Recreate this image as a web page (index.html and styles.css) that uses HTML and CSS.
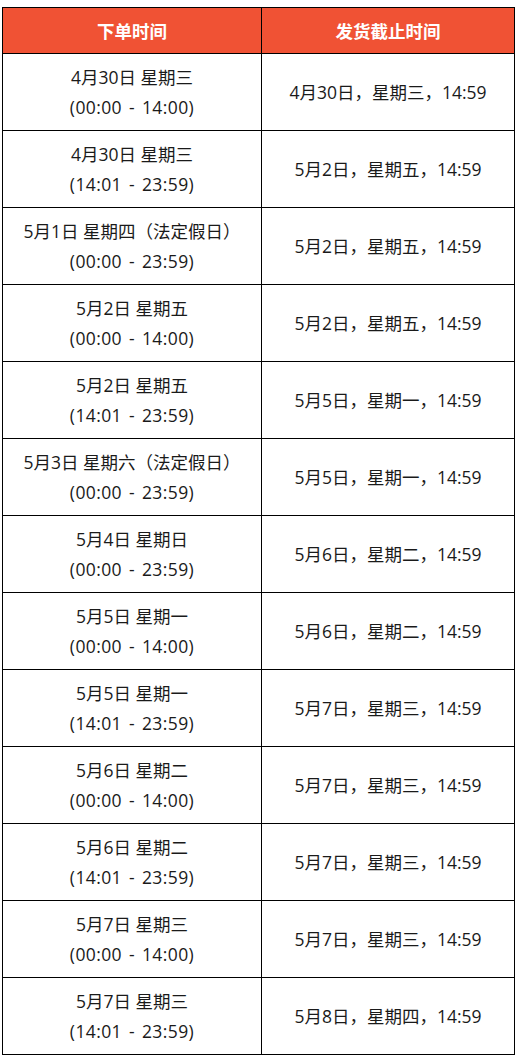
FILE: index.html
```html
<!DOCTYPE html>
<html lang="zh-CN">
<head>
<meta charset="utf-8">
<link rel="stylesheet" href="styles.css">
</head>
<body>
<table class="ship">
  <colgroup><col class="c1"><col class="c2"></colgroup>
  <thead>
    <tr><th>下单时间</th><th>发货截止时间</th></tr>
  </thead>
  <tbody>
    <tr><td>4月30日 星期三<br><span class="t">(00:00 - 14:00)</span></td><td>4月30日，星期三，14:59</td></tr>
    <tr><td>4月30日 星期三<br><span class="t">(14:01 - 23:59)</span></td><td>5月2日，星期五，14:59</td></tr>
    <tr><td>5月1日 星期四（法定假日）<br><span class="t">(00:00 - 23:59)</span></td><td>5月2日，星期五，14:59</td></tr>
    <tr><td>5月2日 星期五<br><span class="t">(00:00 - 14:00)</span></td><td>5月2日，星期五，14:59</td></tr>
    <tr><td>5月2日 星期五<br><span class="t">(14:01 - 23:59)</span></td><td>5月5日，星期一，14:59</td></tr>
    <tr><td>5月3日 星期六（法定假日）<br><span class="t">(00:00 - 23:59)</span></td><td>5月5日，星期一，14:59</td></tr>
    <tr><td>5月4日 星期日<br><span class="t">(00:00 - 23:59)</span></td><td>5月6日，星期二，14:59</td></tr>
    <tr><td>5月5日 星期一<br><span class="t">(00:00 - 14:00)</span></td><td>5月6日，星期二，14:59</td></tr>
    <tr><td>5月5日 星期一<br><span class="t">(14:01 - 23:59)</span></td><td>5月7日，星期三，14:59</td></tr>
    <tr><td>5月6日 星期二<br><span class="t">(00:00 - 14:00)</span></td><td>5月7日，星期三，14:59</td></tr>
    <tr><td>5月6日 星期二<br><span class="t">(14:01 - 23:59)</span></td><td>5月7日，星期三，14:59</td></tr>
    <tr><td>5月7日 星期三<br><span class="t">(00:00 - 14:00)</span></td><td>5月7日，星期三，14:59</td></tr>
    <tr><td>5月7日 星期三<br><span class="t">(14:01 - 23:59)</span></td><td>5月8日，星期四，14:59</td></tr>
  </tbody>
</table>
</body>
</html>
```
FILE: styles.css
```css
html, body {
  margin: 0;
  padding: 0;
  background: #ffffff;
}
body {
  padding: 7px 0 0 2px;
  font-family: "Open Sans", "Noto Sans CJK SC", sans-serif;
  color: #1a1a1a;
}
.ship {
  border-collapse: collapse;
  width: 512px;
  table-layout: fixed;
}
.ship .c1 { width: 259px; }
.ship .c2 { width: 253px; }
.ship th, .ship td {
  border: 1px solid #000;
  text-align: center;
  vertical-align: middle;
  padding: 0;
}
.ship th {
  background: #f05234;
  color: #fff;
  font-weight: 700;
  font-size: 17.5px;
  height: 45px;
}
.ship td {
  font-size: 17.5px;
  line-height: 30px;
  height: 76px;
}
.ship .t {
  letter-spacing: 0.4px;
  word-spacing: 2px;
}
```
